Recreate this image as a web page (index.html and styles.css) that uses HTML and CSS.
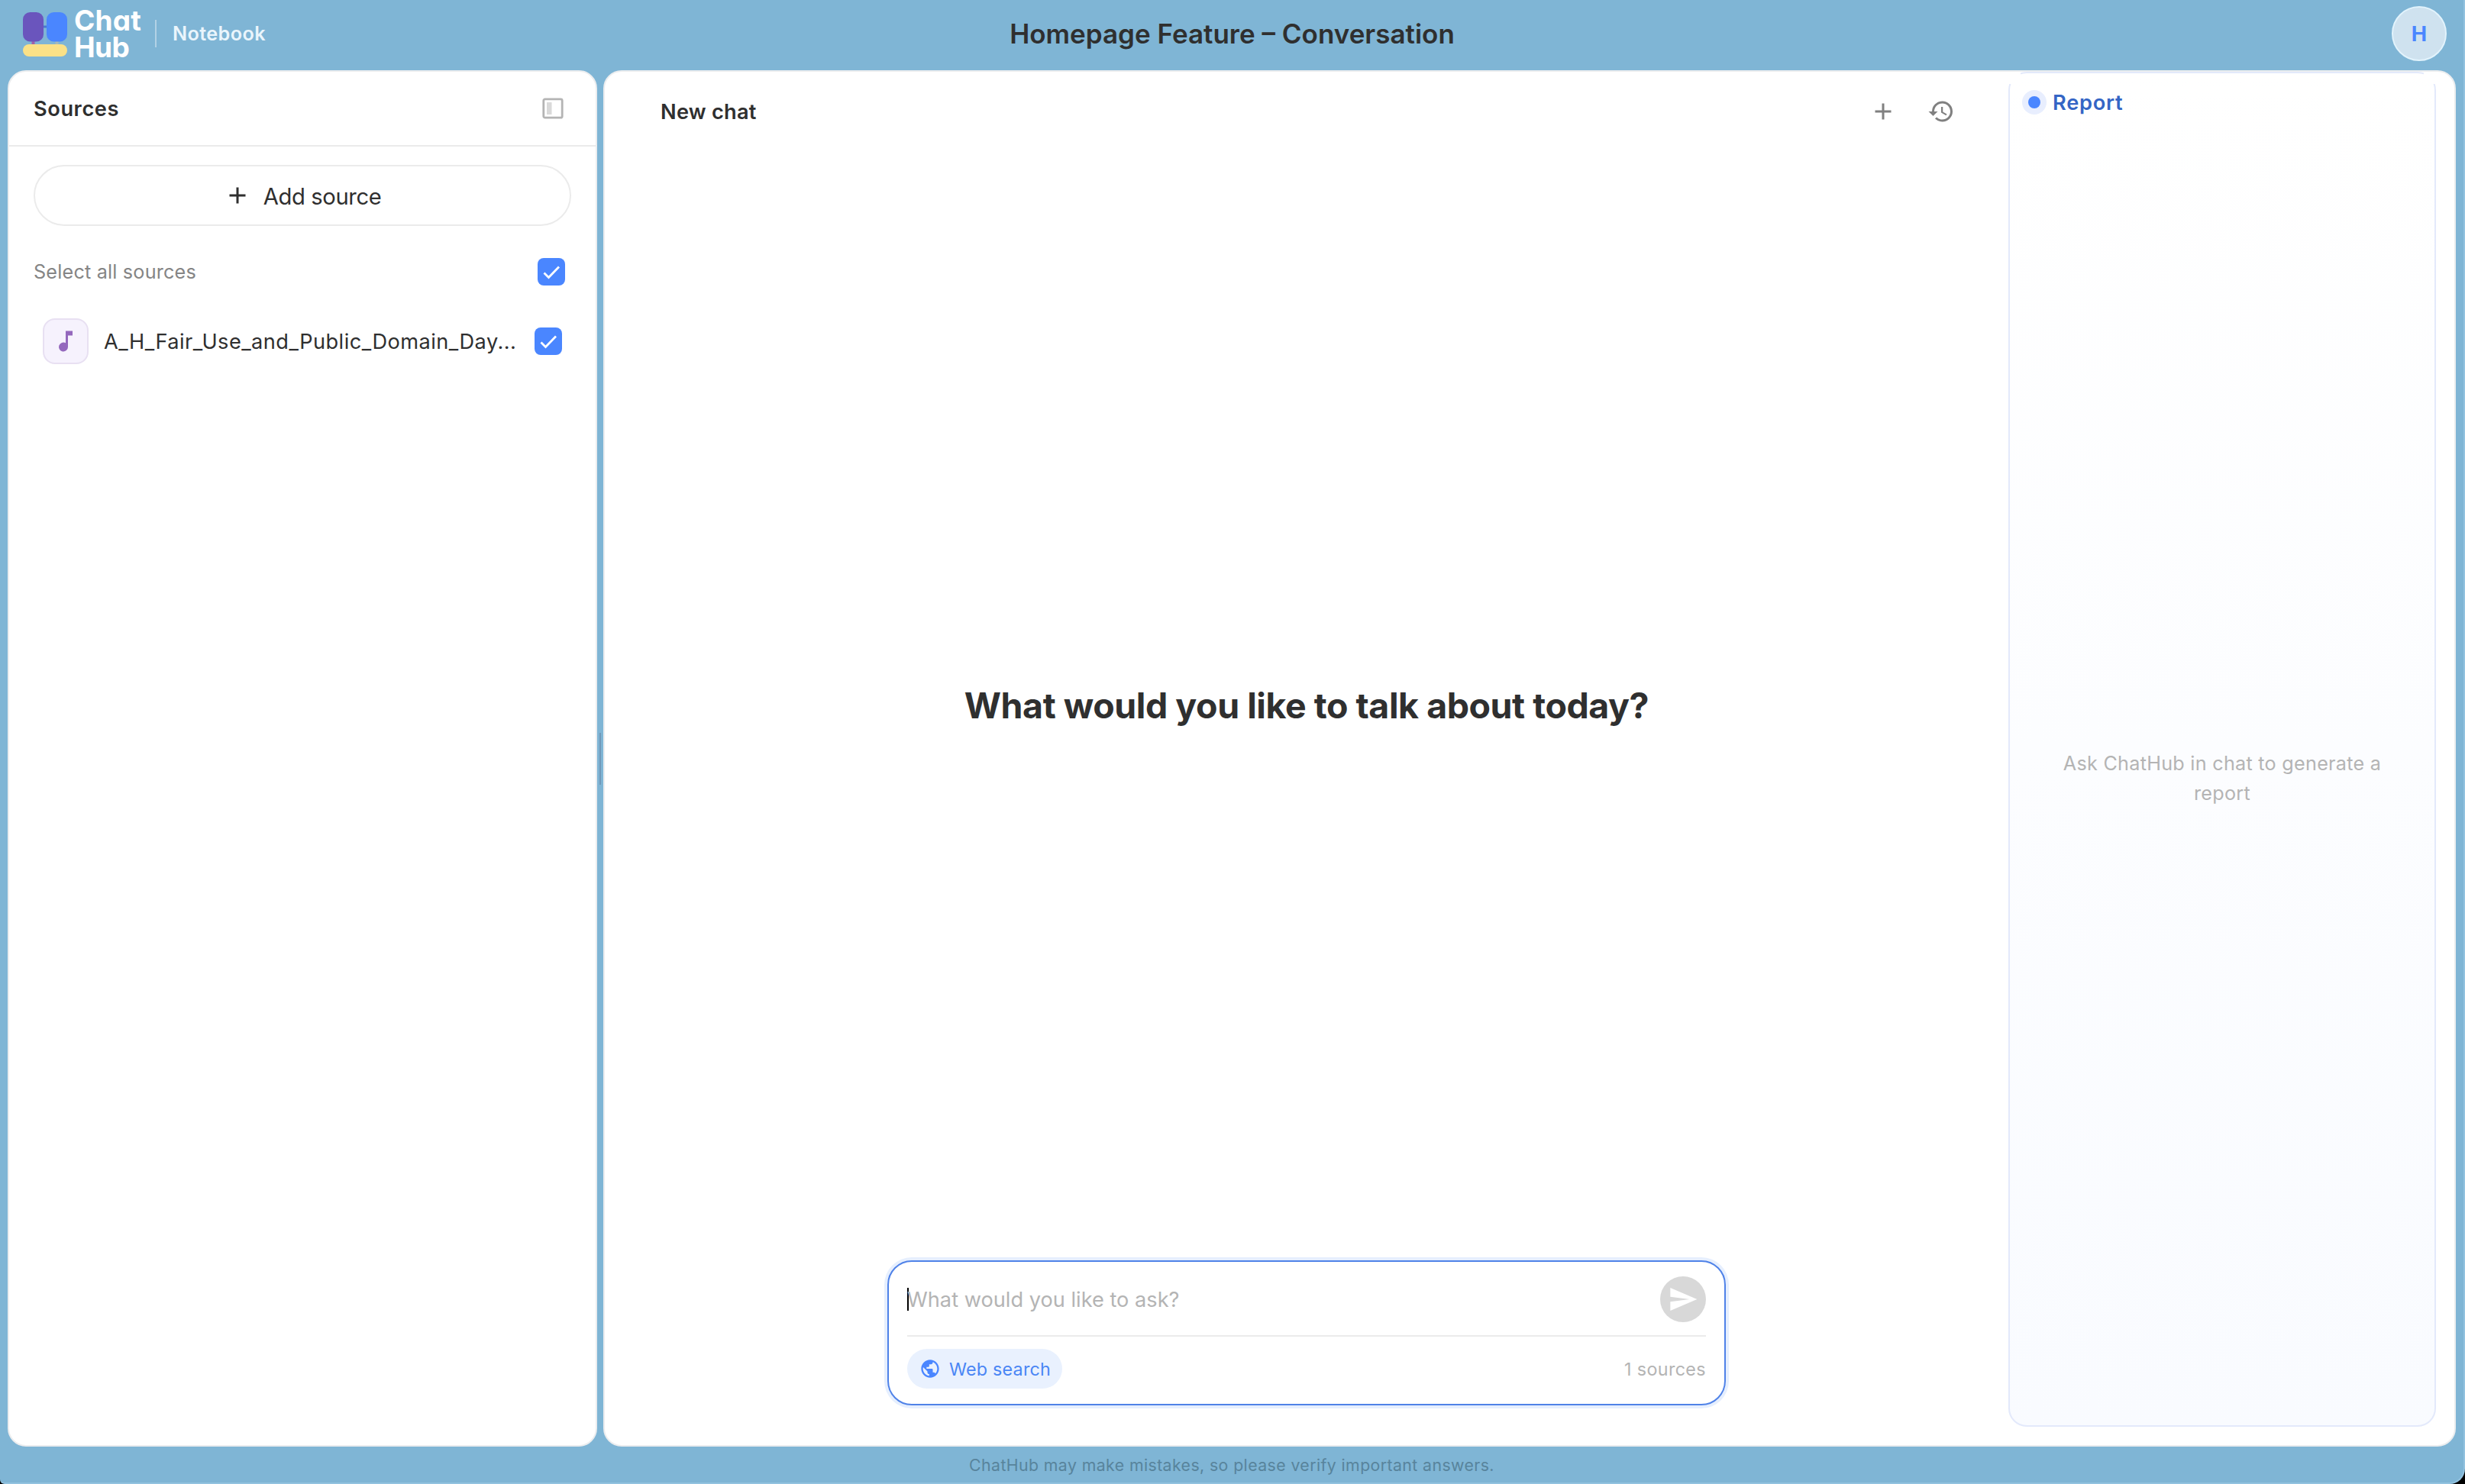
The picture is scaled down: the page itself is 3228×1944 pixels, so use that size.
FILE: index.html
```
<!DOCTYPE html>
<html lang="en">
<head>
    <meta charset="UTF-8">
    <meta name="viewport" content="width=device-width, initial-scale=1.0">
    <title>ChatHub Notebook</title>
    <link rel="stylesheet" href="styles.css">
</head>
<body>
    <div class="app">
        <!-- Top bar -->
        <header class="topbar">
            <div class="brand">
                <svg class="logo" viewBox="0 0 58 58" width="58" height="58">
                    <path d="M24 19h10" stroke="#4a78cf" stroke-width="3"/>
                    <path d="M13.5 36v7" stroke="#a060a8" stroke-width="4"/>
                    <path d="M44.5 36v7" stroke="#a9b9b8" stroke-width="4"/>
                    <rect x="0" y="0" width="27" height="38.5" rx="9.5" fill="#6a55bd"/>
                    <rect x="31" y="0" width="27" height="38.5" rx="9.5" fill="#4a86ff"/>
                    <rect x="0" y="42" width="58" height="16" rx="8" fill="#fbe187"/>
                </svg>
                <div class="wordmark">
                    <span>Chat</span>
                    <span class="hub">Hub</span>
                </div>
                <div class="brand-divider"></div>
                <span class="product">Notebook</span>
            </div>
            <h1>Homepage Feature – Conversation</h1>
            <div class="user">
                <div class="avatar">H</div>
            </div>
        </header>

        <main class="workspace">
            <!-- Sources panel -->
            <aside class="panel sources">
                <div class="sources-header">
                    <h2>Sources</h2>
                    <svg viewBox="0 0 28 28" width="28" height="28">
                        <rect x="1.8" y="1.8" width="24.4" height="24.4" rx="2" fill="none" stroke="#b4b4b4" stroke-width="2.8"/>
                        <rect x="6" y="6" width="6.5" height="16" fill="#d9d9d9"/>
                    </svg>
                </div>
                <div class="sources-body">
                    <button class="add-source">
                        <svg viewBox="0 0 24 24" width="36" height="36"><path d="M19 13h-6v6h-2v-6H5v-2h6V5h2v6h6v2z"/></svg>
                        <span>Add source</span>
                    </button>
                    <div class="select-all">
                        <span>Select all sources</span>
                        <div class="checkbox">
                            <svg viewBox="0 0 36 36" width="36" height="36"><path d="M8.5 19.5l6 6L28 11.5"/></svg>
                        </div>
                    </div>
                    <div class="source-item">
                        <div class="thumb">
                            <svg viewBox="0 0 24 24" width="36" height="36"><path d="M12 3v10.55A4 4 0 1 0 14 17V7h4V3h-6z"/></svg>
                        </div>
                        <span class="source-name">A_H_Fair_Use_and_Public_Domain_Day...</span>
                        <div class="checkbox">
                            <svg viewBox="0 0 36 36" width="36" height="36"><path d="M8.5 19.5l6 6L28 11.5"/></svg>
                        </div>
                    </div>
                </div>
            </aside>

            <div class="resizer"><div class="resizer-handle"></div></div>

            <!-- Chat and report -->
            <section class="panel content">
                <div class="chat">
                    <div class="chat-header">
                        <h2>New chat</h2>
                        <div class="chat-actions">
                            <svg viewBox="0 0 24 24" width="36" height="36"><path d="M19 13h-6v6h-2v-6H5v-2h6V5h2v6h6v2z"/></svg>
                            <svg viewBox="0 0 24 24" width="36" height="36"><path d="M13 3a9 9 0 0 0-9 9H1l3.89 3.89.07.14L9 12H6c0-3.87 3.13-7 7-7s7 3.13 7 7-3.13 7-7 7c-1.93 0-3.68-.79-4.94-2.06l-1.42 1.42A8.954 8.954 0 0 0 13 21a9 9 0 0 0 0-18zm-1 5v5l4.28 2.54.72-1.21-3.5-2.08V8H12z"/></svg>
                        </div>
                    </div>
                    <div class="welcome">What would you like to talk about today?</div>
                    <div class="composer">
                        <div class="composer-top">
                            <div class="prompt"><span class="caret"></span>What would you like to ask?</div>
                            <button class="send">
                                <svg viewBox="0 0 24 24" width="40" height="40"><path d="M2.01 21L23 12 2.01 3 2 10l15 2-15 2z"/></svg>
                            </button>
                        </div>
                        <div class="composer-bottom">
                            <button class="web-search">
                                <svg viewBox="0 0 24 24" width="28" height="28"><path d="M12 2C6.48 2 2 6.48 2 12s4.48 10 10 10 10-4.48 10-10S17.52 2 12 2zm-1 17.93c-3.95-.49-7-3.85-7-7.93 0-.62.08-1.21.21-1.79L9 15v1c0 1.1.9 2 2 2v1.93zm6.9-2.54c-.26-.81-1-1.39-1.9-1.39h-1v-3c0-.55-.45-1-1-1H8v-2h2c.55 0 1-.45 1-1V7h2c1.1 0 2-.9 2-2v-.41c2.93 1.19 5 4.06 5 7.41 0 2.08-.8 3.97-2.1 5.39z"/></svg>
                                <span>Web search</span>
                            </button>
                            <span class="source-count">1 sources</span>
                        </div>
                    </div>
                </div>
                <div class="report">
                    <div class="report-header">
                        <div class="dot"></div>
                        <h2>Report</h2>
                    </div>
                    <div class="report-empty">Ask ChatHub in chat to generate a<br>report</div>
                </div>
            </section>
        </main>

        <footer>ChatHub may make mistakes, so please verify important answers.</footer>
    </div>
</body>
</html>
```
FILE: styles.css
```
* {
    box-sizing: border-box;
}
html {
    background: #000;
}
body {
    margin: 0;
    font-family: Inter, "Liberation Sans", sans-serif;
    color: #2f2f2f;
}
svg {
    display: block;
    flex-shrink: 0;
}
button {
    border: none;
    font-family: inherit;
    cursor: pointer;
}
h1, h2 {
    margin: 0;
    font-weight: 600;
}
h2 {
    font-size: 27.2px;
}
.app {
    display: flex;
    flex-direction: column;
    height: 1944px;
    background: #7fb5d5;
    border-right: 2px solid #92c2df;
    border-bottom: 2px solid #92c2df;
    border-radius: 0 0 20px 6px;
}

/* Top bar */
.topbar {
    display: grid;
    grid-template-columns: 1fr auto 1fr;
    align-items: center;
    height: 88px;
    margin-bottom: 4px;
    padding: 0 22px 0 30px;
}
.topbar h1 {
    font-size: 35px;
    padding-right: 7px;
}
.brand {
    display: flex;
    align-items: center;
}
.logo {
    margin-top: 2px;
}
.wordmark {
    display: flex;
    flex-direction: column;
    width: 106px;
    margin: -1px 0 0 9px;
    color: #fff;
    font-size: 37px;
    font-weight: 650;
    line-height: 35px;
    letter-spacing: 0.2px;
    font-feature-settings: "cv11";
}
.wordmark .hub {
    letter-spacing: -0.6px;
}
.brand-divider {
    width: 2px;
    height: 36px;
    background: rgba(255, 255, 255, 0.4);
}
.product {
    margin-left: 21px;
    color: #eaf5fc;
    font-size: 25.2px;
    font-weight: 600;
    letter-spacing: 0.4px;
}
.user {
    display: flex;
    justify-content: flex-end;
}
.avatar {
    display: flex;
    align-items: center;
    justify-content: center;
    width: 72px;
    height: 72px;
    border: 2px solid #e2f3fc;
    border-radius: 50%;
    background: #cfe2ef;
    color: #4a86ff;
    font-size: 27.2px;
    font-weight: 700;
}

/* Layout */
.workspace {
    display: flex;
    height: 1803px;
    padding: 0 10px;
}
.panel {
    background: #fff;
    border: 2px solid #ebedef;
    border-radius: 24px;
}
.sources {
    width: 772px;
}
.resizer {
    display: flex;
    align-items: center;
    justify-content: center;
    width: 8px;
}
.resizer-handle {
    width: 2px;
    height: 68px;
    background: #7099b9;
}
.content {
    display: flex;
    flex: 1;
    padding-right: 24px;
}

/* Sources */
.sources-header {
    display: flex;
    align-items: center;
    justify-content: space-between;
    height: 98px;
    padding: 0 42px 0 32px;
    border-bottom: 2px solid #ebebeb;
}
.sources-header h2 {
    letter-spacing: 0.58px;
}
.sources-body {
    padding: 24px 32px;
}
.add-source {
    display: flex;
    align-items: center;
    justify-content: center;
    gap: 16px;
    width: 704px;
    height: 80px;
    border: 2px solid #ebebeb;
    border-radius: 40px;
    background: #fff;
    color: #2f2f2f;
    font-size: 29.2px;
    letter-spacing: -0.38px;
}
.add-source span {
    padding-top: 2px;
}
.add-source svg {
    fill: #2f2f2f;
}
.select-all {
    display: flex;
    align-items: center;
    justify-content: space-between;
    height: 36px;
    margin: 42px 8px 0 0;
    color: #858585;
    font-size: 25.2px;
    letter-spacing: 0.19px;
}
.checkbox {
    flex-shrink: 0;
    width: 36px;
    height: 36px;
    border-radius: 8px;
    background: #4a86ff;
}
.checkbox svg {
    fill: none;
    stroke: #fff;
    stroke-width: 2.8;
}
.source-item {
    display: flex;
    align-items: center;
    margin-top: 43px;
    padding: 0 12px;
}
.thumb {
    display: flex;
    align-items: center;
    justify-content: center;
    width: 60px;
    height: 60px;
    border: 2px solid #e8e0f2;
    border-radius: 16px;
    background: #f6f2fd;
}
.thumb svg {
    fill: #9468bd;
}
.source-name {
    flex: 1;
    margin-left: 20px;
    font-size: 27.2px;
    letter-spacing: 0.45px;
    white-space: nowrap;
}

/* Chat */
.chat {
    display: flex;
    flex: 1;
    flex-direction: column;
    align-items: center;
    padding-bottom: 52px;
}
.chat-header {
    display: flex;
    align-items: center;
    justify-content: space-between;
    align-self: stretch;
    height: 104px;
    padding: 0 70px 0 73px;
}
.chat-header h2 {
    letter-spacing: 0.25px;
}
.chat-actions {
    display: flex;
    gap: 40px;
}
.chat-actions svg {
    fill: #808080;
}
.welcome {
    display: flex;
    flex: 1;
    align-items: center;
    padding-bottom: 2px;
    font-size: 46.5px;
    font-weight: 700;
    letter-spacing: -0.45px;
}
.composer {
    width: 1098px;
    height: 190px;
    padding: 0 24px;
    border: 2px solid #4f82e8;
    border-radius: 32px;
    background: #fff;
    box-shadow: 0 0 0 4px #e6effe;
}
.composer-top {
    display: flex;
    align-items: center;
    justify-content: space-between;
    height: 98px;
    padding-top: 2px;
    border-bottom: 2px solid #ebebeb;
}
.prompt {
    display: flex;
    align-items: center;
    color: #b4b4b4;
    font-size: 27.2px;
}
.caret {
    width: 2px;
    height: 30px;
    margin-right: -2px;
    background: #000;
}
.send {
    display: flex;
    align-items: center;
    justify-content: center;
    width: 60px;
    height: 60px;
    padding: 0;
    border-radius: 50%;
    background: #d8d8d8;
}
.send svg {
    fill: #fff;
}
.composer-bottom {
    display: flex;
    align-items: center;
    justify-content: space-between;
    padding-top: 16px;
}
.web-search {
    display: flex;
    align-items: center;
    gap: 11px;
    width: 203px;
    height: 52px;
    padding: 0 0 0 16px;
    border-radius: 26px;
    background: #e9f1fe;
    color: #4a86f5;
    font-size: 23.3px;
    letter-spacing: 0.22px;
    white-space: nowrap;
}
.web-search svg {
    fill: #4a86ff;
}
.source-count {
    color: #b4b4b4;
    font-size: 23.3px;
    letter-spacing: 0.37px;
}

/* Report */
.report {
    position: relative;
    display: flex;
    flex-direction: column;
    width: 560px;
    height: 1775px;
    border: 2px solid #e3e9fb;
    border-radius: 24px;
    background: linear-gradient(#fff, #f9fbff);
}
/* fade the top corners of the card into the panel */
.report::before, .report::after {
    content: "";
    position: absolute;
    top: -2px;
    width: 16px;
    height: 16px;
    background: #fff;
}
.report::before {
    left: -2px;
}
.report::after {
    right: -2px;
}
.report-header {
    display: flex;
    align-items: center;
    height: 76px;
    padding-left: 24px;
}
.dot {
    width: 16px;
    height: 16px;
    border-radius: 50%;
    background: #4a86ff;
    box-shadow: 0 0 0 8px #e8eefe;
}
.report-header h2 {
    margin-left: 16px;
    color: #3465c5;
    letter-spacing: 0.75px;
}
.report-empty {
    display: flex;
    flex: 1;
    align-items: center;
    justify-content: center;
    color: #b4b4b4;
    font-size: 25.2px;
    line-height: 39px;
    letter-spacing: 0.27px;
    text-align: center;
}

footer {
    flex: 1;
    display: flex;
    align-items: center;
    justify-content: center;
    padding-top: 1px;
    color: #58849c;
    font-size: 21.3px;
    letter-spacing: 0.4px;
}
```
